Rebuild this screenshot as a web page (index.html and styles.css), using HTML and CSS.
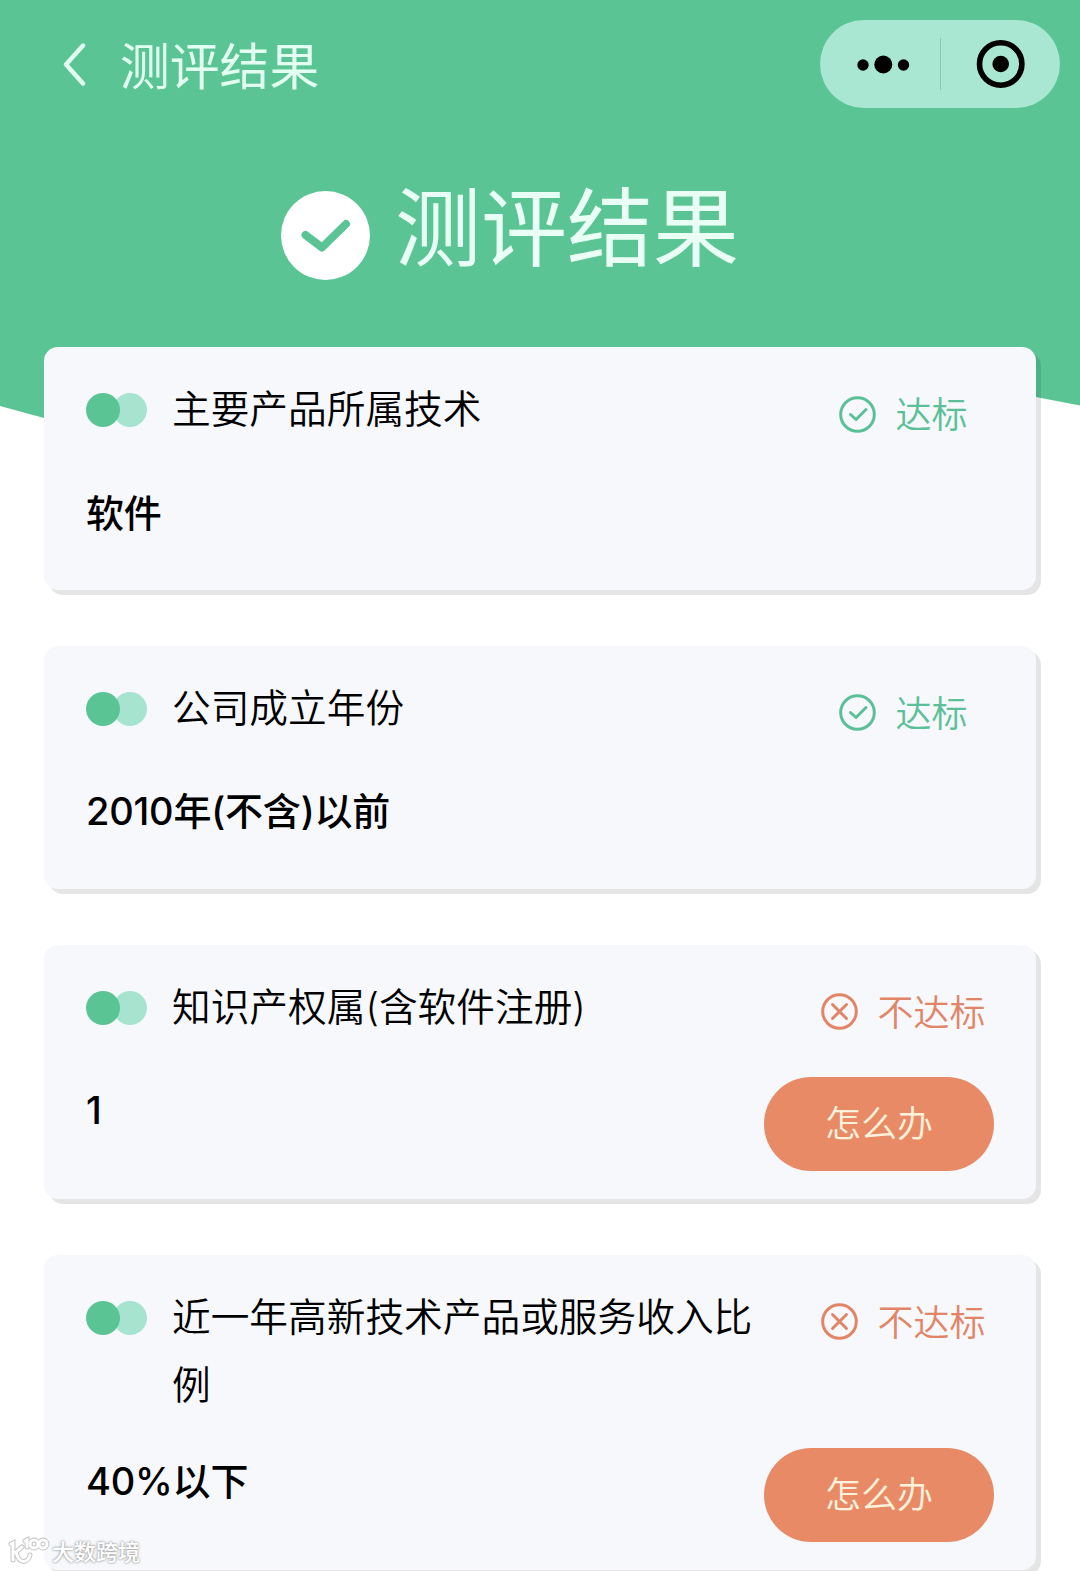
FILE: index.html
```html
<!DOCTYPE html>
<html lang="zh-CN">
<head>
    <meta charset="UTF-8">
    <meta name="viewport" content="width=device-width, initial-scale=1.0">
    <title>测评结果</title>
    <link rel="stylesheet" href="styles.css">
</head>
<body>
    <div class="page">
        <svg class="header-bg" viewBox="0 0 1080 440">
            <path d="M0 0H1080V405.5L1036 397C850 370 240 468 44 418L0 406Z" fill="#5ac495"/>
        </svg>

        <header class="navbar">
            <a href="#" class="back">
                <svg width="24" height="44" viewBox="0 0 24 44">
                    <path d="M21 3.5L4 22.5L21 41.5" fill="none" stroke="#e2fff1" stroke-width="4.4" stroke-linecap="round" stroke-linejoin="round"/>
                </svg>
            </a>
            <span class="nav-title">测评结果</span>
            <div class="capsule">
                <svg class="capsule-icon" width="120" height="88" viewBox="0 0 120 88">
                    <circle cx="43" cy="45" r="5.7"/>
                    <circle cx="63.3" cy="44.5" r="9"/>
                    <circle cx="83.5" cy="45" r="5.7"/>
                </svg>
                <span class="capsule-line"></span>
                <svg class="capsule-icon" width="119" height="88" viewBox="0 0 119 88">
                    <circle cx="59.7" cy="44" r="21.2" fill="none" stroke="#000" stroke-width="5.6"/>
                    <circle cx="59.7" cy="44" r="8.3"/>
                </svg>
            </div>
        </header>

        <div class="hero">
            <svg class="hero-icon" width="89" height="89" viewBox="0 0 89 89">
                <circle cx="44.5" cy="44.5" r="44.5" fill="#fff"/>
                <path d="M24.5 44L41 56.5L65 33" fill="none" stroke="#5ac495" stroke-width="8" stroke-linecap="round" stroke-linejoin="round"/>
            </svg>
            <h1>测评结果</h1>
        </div>

        <main class="cards">
            <section class="card">
                <div class="card-head">
                    <div class="dots"><i></i><i></i></div>
                    <h2>主要产品所属技术</h2>
                    <div class="status ok">
                        <svg width="37" height="37" viewBox="0 0 37 37">
                            <circle cx="18.5" cy="18.5" r="16.8"/>
                            <path d="M11.5 18.5L17 23.5L27 13.5"/>
                        </svg>
                        <span>达标</span>
                    </div>
                </div>
                <div class="card-body">
                    <p class="value">软件</p>
                </div>
            </section>

            <section class="card">
                <div class="card-head">
                    <div class="dots"><i></i><i></i></div>
                    <h2>公司成立年份</h2>
                    <div class="status ok">
                        <svg width="37" height="37" viewBox="0 0 37 37">
                            <circle cx="18.5" cy="18.5" r="16.8"/>
                            <path d="M11.5 18.5L17 23.5L27 13.5"/>
                        </svg>
                        <span>达标</span>
                    </div>
                </div>
                <div class="card-body">
                    <p class="value">2010年(不含)以前</p>
                </div>
            </section>

            <section class="card">
                <div class="card-head">
                    <div class="dots"><i></i><i></i></div>
                    <h2>知识产权属(含软件注册)</h2>
                    <div class="status fail">
                        <svg width="37" height="37" viewBox="0 0 37 37">
                            <circle cx="18.5" cy="18.5" r="16.8"/>
                            <path d="M11.5 11.5L25.5 25.5M25.5 11.5L11.5 25.5"/>
                        </svg>
                        <span>不达标</span>
                    </div>
                </div>
                <div class="card-body">
                    <p class="value">1</p>
                    <button class="help-btn">怎么办</button>
                </div>
            </section>

            <section class="card">
                <div class="card-head">
                    <div class="dots"><i></i><i></i></div>
                    <h2>近一年高新技术产品或服务收入比例</h2>
                    <div class="status fail">
                        <svg width="37" height="37" viewBox="0 0 37 37">
                            <circle cx="18.5" cy="18.5" r="16.8"/>
                            <path d="M11.5 11.5L25.5 25.5M25.5 11.5L11.5 25.5"/>
                        </svg>
                        <span>不达标</span>
                    </div>
                </div>
                <div class="card-body">
                    <p class="value">40%以下</p>
                    <button class="help-btn">怎么办</button>
                </div>
            </section>
        </main>

        <div class="watermark">
            <svg width="42" height="32" viewBox="0 0 42 32">
                <g class="mark-edge">
                    <path d="M3 8L5 7V24M14 11L8 16C11 29 20 27 22 19"/>
                    <path d="M17 5L19 4V11"/>
                    <circle cx="26" cy="8" r="4"/>
                    <circle cx="35" cy="8" r="4"/>
                </g>
                <g class="mark">
                    <path d="M3 8L5 7V24M14 11L8 16C11 29 20 27 22 19"/>
                    <path d="M17 5L19 4V11"/>
                    <circle cx="26" cy="8" r="4"/>
                    <circle cx="35" cy="8" r="4"/>
                </g>
            </svg>
            <span>大数跨境</span>
        </div>
    </div>
</body>
</html>
```
FILE: styles.css
```css
* {
    margin: 0;
    padding: 0;
    box-sizing: border-box;
}

body {
    font-family: Inter, "Noto Sans CJK SC", sans-serif;
    font-weight: 350;
    background: #fff;
    color: #000;
}

.page {
    position: relative;
    width: 1080px;
    height: 1571px;
    overflow: hidden;
}

.header-bg {
    position: absolute;
    top: 0;
    left: 0;
    width: 1080px;
    height: 440px;
    z-index: -1;
}

.navbar {
    display: flex;
    align-items: center;
    height: 128px;
    padding: 0 20px 0 62px;
}

.back {
    display: flex;
    width: 58px;
}

.nav-title {
    flex: 1;
    padding-top: 5px;
    font-size: 49.8px;
    font-weight: 400;
    line-height: 70px;
    color: #e2fff1;
}

.capsule {
    display: flex;
    align-items: center;
    width: 240px;
    height: 88px;
    border-radius: 44px;
    background: #a9e7d3;
}

.capsule-icon {
    display: block;
}

.capsule-line {
    width: 1px;
    height: 52px;
    background: #87c9b2;
}

.hero {
    display: flex;
    align-items: center;
    height: 219px;
    padding: 0 0 4px 281px;
    gap: 25px;
}

.hero h1 {
    font-size: 86px;
    font-weight: 400;
    line-height: 120px;
    margin-top: -14px;
    color: #e9fff5;
}

.cards {
    display: flex;
    flex-direction: column;
    gap: 55.8px;
    padding: 0 44px;
}

.card {
    padding: 27px 0 28px 42px;
    border-radius: 14px;
    background: #f6f8fc;
    box-shadow: 5px 5px 0 rgba(0, 0, 0, 0.1);
}

.card-head {
    display: flex;
    align-items: flex-start;
    min-height: 77.5px;
}

.dots {
    display: flex;
    flex-shrink: 0;
    width: 86px;
    padding-top: 19px;
}

.dots i {
    width: 34px;
    height: 34px;
    border-radius: 50%;
    background: #5ac495;
    z-index: 1;
}

.dots i + i {
    margin-left: -7px;
    background: #a6e4d0;
    z-index: 0;
}

.card h2 {
    flex: 1;
    padding-top: 1px;
    font-size: 38.7px;
    font-weight: 350;
    line-height: 68.5px;
}

.status {
    display: flex;
    align-items: center;
    justify-content: center;
    flex-shrink: 0;
    width: 265px;
    height: 56px;
    margin-top: 12px;
    gap: 19px;
    font-size: 36px;
}

.status svg {
    fill: none;
    stroke: currentColor;
    stroke-width: 3;
    stroke-linecap: round;
    stroke-linejoin: round;
}

.status span {
    padding-bottom: 4px;
}

.ok {
    color: #5bc098;
}

.fail {
    color: #e28566;
}

.card-body {
    display: flex;
    align-items: flex-start;
    justify-content: space-between;
    min-height: 82.5px;
    margin-top: 28px;
    padding-right: 42px;
}

.value {
    font-size: 38px;
    font-weight: 500;
    line-height: 67px;
    letter-spacing: -0.2px;
}

.help-btn {
    width: 230px;
    height: 94px;
    padding-bottom: 6px;
    border: none;
    border-radius: 47px;
    background: #e88a66;
    color: #fff2dc;
    font-family: inherit;
    font-size: 36px;
    font-weight: 350;
}

/* watermark, bottom left */
.watermark {
    position: absolute;
    left: 8px;
    bottom: 3px;
    display: flex;
    align-items: center;
    gap: 2px;
    font-size: 22px;
    font-weight: 500;
    line-height: 32px;
    color: #fff;
    text-shadow: 0 0 2px #999, 0 0 3px #aaa;
}

.watermark svg {
    fill: none;
    stroke-linecap: round;
}

.mark-edge {
    stroke: #c4c4c6;
    stroke-width: 5;
}

.mark {
    stroke: #fff;
    stroke-width: 3;
}
```
